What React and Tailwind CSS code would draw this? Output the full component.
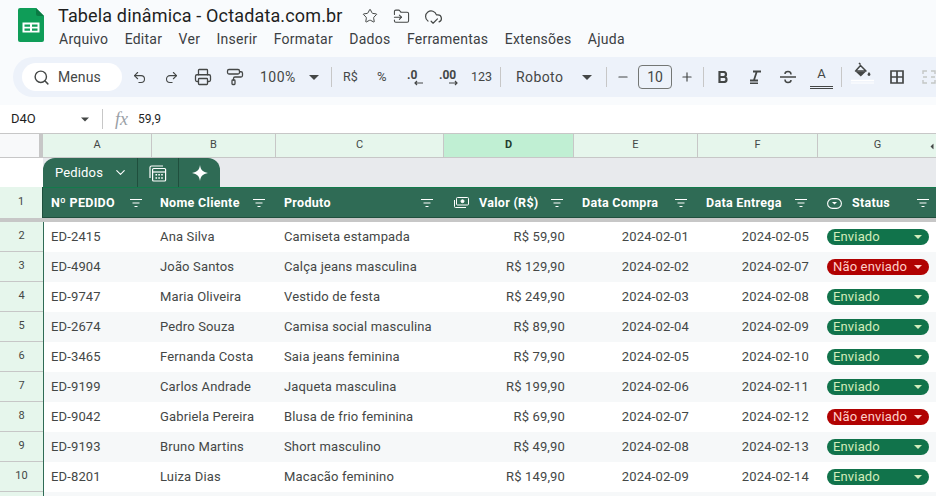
import React from "react";
import { Search, Undo2, Redo2, Printer, PaintRoller, Star, FolderInput, CloudCheck, ChevronDown, Minus, Plus } from "lucide-react";

const COLS = "grid grid-cols-[43px_109px_124px_168px_130px_124px_120px_119px]";
const rows = [
  [2,"ED-2415","Ana Silva","Camiseta estampada","R$ 59,90","2024-02-01","2024-02-05",true],
  [3,"ED-4904","João Santos","Calça jeans masculina","R$ 129,90","2024-02-02","2024-02-07",false],
  [4,"ED-9747","Maria Oliveira","Vestido de festa","R$ 249,90","2024-02-03","2024-02-08",true],
  [5,"ED-2674","Pedro Souza","Camisa social masculina","R$ 89,90","2024-02-04","2024-02-09",true],
  [6,"ED-3465","Fernanda Costa","Saia jeans feminina","R$ 79,90","2024-02-05","2024-02-10",true],
  [7,"ED-9199","Carlos Andrade","Jaqueta masculina","R$ 199,90","2024-02-06","2024-02-11",true],
  [8,"ED-9042","Gabriela Pereira","Blusa de frio feminina","R$ 69,90","2024-02-07","2024-02-12",false],
  [9,"ED-9193","Bruno Martins","Short masculino","R$ 49,90","2024-02-08","2024-02-13",true],
  [10,"ED-8201","Luiza Dias","Macacão feminino","R$ 149,90","2024-02-09","2024-02-14",true],
];

const Caret = ({ className = "" }) => (
  <svg width="10" height="5" viewBox="0 0 10 5" className={className} fill="currentColor"><path d="M0 0h10L5 5z" /></svg>
);
const Filter = () => (
  <svg width="14" height="10" viewBox="0 0 14 10" className="shrink-0 text-white" stroke="currentColor" strokeWidth="1" fill="none">
    <path d="M1 1.500h12M3.500 5h7M5.500 8.500h3" />
  </svg>
);
const Sep = () => <div className="w-px h-5 bg-[#c7c7c7] shrink-0" />;
const Logo = () => (
  <svg width="26" height="34" viewBox="0 0 26 34" className="shrink-0">
    <path d="M2 0h16l8 8v24a2 2 0 0 1-2 2H2a2 2 0 0 1-2-2V2a2 2 0 0 1 2-2z" fill="#0f9d58" />
    <path d="M18 0l8 8h-6a2 2 0 0 1-2-2z" fill="#0a7a43" />
    <path d="M4.500 14.500h17v10h-17z" fill="#fff" />
    <path d="M6.500 16.500h5.500v2.200H6.500zM14 16.500h5.500v2.200H14zM6.500 20.500h5.500v2.200H6.500zM14 20.500h5.500v2.200H14z" fill="#0f9d58" />
  </svg>
);
const Calc = () => (
  <svg width="18" height="18" viewBox="0 0 18 18" fill="none" stroke="#fff" strokeWidth="1.200">
    <path d="M1 14V3.500A1.500 1.500 0 0 1 2.500 2H14" />
    <rect x="3.600" y="4.500" width="13" height="12.500" rx="1" />
    <path d="M3.600 8h13" />
    <path d="M6.500 10.800h1.600M9.300 10.800h1.600M12.200 10.800h1.600M6.500 14h1.600M9.300 14h1.600M12.200 14h1.600" strokeWidth="1.500" />
  </svg>
);
const Spark = () => (
  <svg width="16" height="16" viewBox="0 0 16 16" fill="#fff"><path d="M8 0c.7 4.800 2.800 7 8 8-5.200 1-7.300 3.200-8 8-.7-4.800-2.800-7-8-8 5.200-1 7.300-3.200 8-8z" /></svg>
);
const Bucket = () => (
  <svg width="23" height="26" viewBox="0 0 23 26" fill="none">
    <path d="M8 1 9.500 2.500M5 8.500 9.500 3.500l5.500 5.500H4.500z" stroke="#444746" strokeWidth="1.500" strokeLinejoin="round" />
    <path d="M4.500 9.500h10.500L9.800 14.500z" fill="#444746" />
    <path d="M18 10c.9 1.200 1.400 2 1.400 2.600a1.400 1.400 0 0 1-2.800 0c0-.6.500-1.400 1.400-2.600z" fill="#444746" />
    <path d="M0 18.500h23" stroke="#fff" strokeWidth="1.500" />
    <path d="M0 21h23" stroke="#fff" strokeWidth="1" />
  </svg>
);

const ColHead = ({ children, active }) => (
  <div className={`flex items-center justify-center border-r border-[#c7c7c7] text-[11px] ${active ? "bg-[#c0efd3] font-bold text-[#1f3d2f]" : "bg-[#e6f6ec] text-[#444746]"}`}>
    {children}
  </div>
);
const Head = ({ children, icon, className = "" }) => (
  <div className={`bg-[#2f6b55] border-t border-[#137a4b] border-b border-b-[#1f4f3d] pt-px flex items-center justify-between font-bold text-[12.5px] text-white tracking-[0.3px] ${className}`}>
    {icon}
    <span className={icon ? "mr-auto ml-[10px]" : ""}>{children}</span>
    <Filter />
  </div>
);
const BodyRow = ({ num, striped, children }) => (
  <div className={`${COLS} h-[30px] shrink-0 text-[13px] text-[#444746] tracking-[0.15px]`}>
    <div className="bg-[#e6f6ec] flex items-center justify-center text-[11px] tracking-normal border-b border-[#c7c7c7]">{num}</div>
    <div className={`${striped ? "bg-[#f6f8f9]" : "bg-white"} col-span-7 border-l border-[#2f6b55] grid grid-cols-[108px_124px_168px_130px_124px_120px_119px] items-center`}>
      {children}
    </div>
  </div>
);

export default function App() {
  return (
    <div className="w-[936px] h-[496px] overflow-hidden bg-white font-['Roboto',sans-serif] text-[#444746] flex flex-col">
      <div className="h-[105px] shrink-0 bg-[#f9fbfd] flex flex-col">
        <div className="h-[57px] flex pl-[18px] pt-[8px]">
          <Logo />
          <div className="ml-[14px] flex flex-col">
            <div className="flex items-center h-[16px]">
              <span className="text-[18px] tracking-[0.15px] leading-[16px] text-[#1f1f1f]">Tabela dinâmica - Octadata.com.br</span>
              <Star size={16} strokeWidth={1.500} className="ml-[19px] text-[#444746]" />
              <FolderInput size={17} strokeWidth={1.500} className="ml-[15px] text-[#444746]" />
              <CloudCheck size={19} strokeWidth={1.500} className="ml-[14px] text-[#444746]" />
            </div>
            <div className="flex gap-[16.400px] mt-[7px] text-[14px] tracking-[0.25px] leading-[16px] text-[#3c4043] ml-px">
              {["Arquivo","Editar","Ver","Inserir","Formatar","Dados","Ferramentas","Extensões","Ajuda"].map(m => <span key={m}>{m}</span>)}
            </div>
          </div>
        </div>
        <div className="h-[40px] ml-[13px] pl-[9px] rounded-l-[20px] bg-[#edf2fa] flex items-center">
          <div className="w-[100px] h-[28px] rounded-full bg-white flex items-center pl-[11px] text-[14px] tracking-[0.1px] text-[#444746] shrink-0">
            <Search size={17} strokeWidth={2} />
            <span className="ml-[8px]">Menus</span>
          </div>
          <Undo2 size={15} strokeWidth={1.700} className="ml-[10px]" />
          <Redo2 size={15} strokeWidth={1.700} className="ml-[17px]" />
          <Printer size={18} strokeWidth={1.700} className="ml-[15px]" />
          <PaintRoller size={18} strokeWidth={1.700} className="ml-[14px]" />
          <span className="ml-[16px] text-[14px] tracking-[0.5px] w-[37px]">100%</span>
          <Caret className="ml-[12px]" />
          <div className="ml-[12px]"><Sep /></div>
          <span className="ml-[11px] text-[12.500px] w-[20px]">R$</span>
          <span className="ml-[14px] text-[13px] w-[12px]">%</span>
          <span className="ml-[18px] text-[12px] font-bold relative w-[15px] -top-[2px]">.0<svg className="absolute left-[7px] top-[14px]" width="10" height="6" viewBox="0 0 10 6" fill="none" stroke="#444746" strokeWidth="1.200"><path d="M9 3H1M3 1 1 3l2 2" /></svg></span>
          <span className="ml-[17px] text-[12px] font-bold relative w-[18px] -top-[2px]">.00<svg className="absolute left-[9px] top-[14px]" width="10" height="6" viewBox="0 0 10 6" fill="none" stroke="#444746" strokeWidth="1.200"><path d="M1 3h8M7 1l2 2-2 2" /></svg></span>
          <span className="ml-[14px] text-[12.500px] w-[19px]">123</span>
          <div className="ml-[10px]"><Sep /></div>
          <span className="ml-[15px] text-[14px] tracking-[0.4px] w-[48px]">Roboto</span>
          <Caret className="ml-[18px]" />
          <div className="ml-[14px]"><Sep /></div>
          <Minus size={14} strokeWidth={2} className="ml-[9px]" />
          <div className="ml-[8px] w-[34px] h-[24px] border border-[#747775] rounded-[4px] flex items-center justify-center text-[14px]">10</div>
          <Plus size={14} strokeWidth={2} className="ml-[8px]" />
          <div className="ml-[9px]"><Sep /></div>
          <svg className="ml-[14px]" width="10" height="12" viewBox="0 0 10 12" fill="none" stroke="#444746" strokeWidth="2.200"><path d="M1.500 1h4a2.500 2.500 0 0 1 0 5h-4zM1.500 6h4.500a2.500 2.500 0 0 1 0 5h-4.500z" /></svg>
          <svg className="ml-[22px]" width="11" height="14" viewBox="0 0 11 14" fill="none" stroke="#444746" strokeWidth="2"><path d="M3 1.500h8M6.800 1.500 4 10M0 10.500h8M0 13.300h8" strokeWidth="1.800" /></svg>
          <svg className="ml-[19px]" width="16" height="14" viewBox="0 0 16 14" fill="none" stroke="#444746" strokeWidth="1.500"><path d="M0 7h16M11 4.500C11 2.500 9.800 1.500 8 1.500S5 2.500 5 4M5 9.500c0 2 1.200 3 3 3s3-1 3-2.500" /></svg>
          <span className="ml-[14px] w-[23px] h-[23px] flex flex-col items-center text-[13px] leading-[16px] border-b-[3px] border-double border-[#444746]">A</span>
          <div className="ml-[8px]"><Sep /></div>
          <div className="ml-[9px] mt-[-4px]"><Bucket /></div>
          <svg className="ml-[16px]" width="14" height="14" viewBox="0 0 14 14" fill="none" stroke="#444746" strokeWidth="1.700"><path d="M1 1h12v12H1zM7 1v12M1 7h12" /></svg>
          <svg className="ml-[18px]" width="14" height="14" viewBox="0 0 14 14" fill="none" stroke="#c4c7c5" strokeWidth="1.400"><path d="M5 1H1v3M1 10v3h4M9 1h4v3M13 10v3H9M1 7h4M9 7h4" /></svg>
        </div>
      </div>

      <div className="h-[29px] shrink-0 flex items-center text-[12px] text-[#1f1f1f] border-b border-[#c7c7c7]">
        <span className="ml-[11px] w-[70px] text-[13px]">D4O</span>
        <Caret className="text-[#444746] w-[8px]" />
        <div className="ml-[13px]"><Sep /></div>
        <span className="ml-[12px] italic text-[18px] leading-[18px] text-[#9aa0a6] font-['Liberation_Serif'] w-[15px]">fx</span>
        <span className="ml-[8px] tracking-[0.1px]">59,9</span>
      </div>

      <div className={`${COLS} h-[24px] shrink-0 border-b border-[#c7c7c7]`}>
        <div className="bg-[#f8f9fa] border-r-[4px] border-[#c7c7c7]" />
        <ColHead>A</ColHead><ColHead>B</ColHead><ColHead>C</ColHead>
        <ColHead active>D</ColHead><ColHead>E</ColHead><ColHead>F</ColHead>
        <div className="relative flex items-center justify-center bg-[#e6f6ec] text-[11px]">G<Caret className="absolute right-[2px] top-[10px] w-[6px] rotate-90" /></div>
      </div>

      <div className="h-[29px] shrink-0 flex">
        <div className="w-[43px] shrink-0 bg-white" />
        <div className="flex-1 bg-[#e8eaed]">
          <div className="h-full w-[177px] rounded-t-[12px] bg-[#2f6b55] flex text-white">
            <div className="w-[95px] flex items-center pl-[12px] text-[13px] tracking-[0.15px] border-r border-[#1f4f3d]">Pedidos<ChevronDown size={15} strokeWidth={1.800} className="ml-[10px]" /></div>
            <div className="w-[41px] flex items-center justify-center border-r border-[#1f4f3d]"><Calc /></div>
            <div className="flex-1 flex items-center justify-center"><Spark /></div>
          </div>
        </div>
      </div>

      <div className={`${COLS} h-[31px] shrink-0`}>
        <div className="bg-[#e6f6ec] flex items-center justify-center text-[11px] border-r border-[#1f4f3d]">1</div>
        <Head className="pl-[8px] pr-[9px]">Nº PEDIDO</Head>
        <Head className="pl-[8px] pr-[10px]">Nome Cliente</Head>
        <Head className="pl-[8px] pr-[10px]">Produto</Head>
        <Head className="pl-[10px] pr-[10px]" icon={<svg width="15" height="12" viewBox="0 0 15 12" fill="none" stroke="#fff" strokeWidth="1"><rect x="2.500" y=".5" width="12" height="7.500" rx="1" /><circle cx="8.500" cy="4.200" r="1.500" fill="#fff" /><path d="M.5 3v6.500a1 1 0 0 0 1 1H12" /></svg>}>Valor (R$)</Head>
        <Head className="pl-[8px] pr-[10px]">Data Compra</Head>
        <Head className="pl-[8px] pr-[10px]">Data Entrega</Head>
        <Head className="pl-[9px] pr-[7px]" icon={<svg width="15" height="11" viewBox="0 0 15 11" fill="none" stroke="#fff" strokeWidth="1.100"><rect x=".6" y=".6" width="13.800" height="9.800" rx="4.900" /><path d="M5 4h5L7.500 6.500z" fill="#fff" stroke="none" /></svg>}>Status</Head>
      </div>
      <div className="h-[4px] shrink-0 bg-[#c7c7c7]" />

      {rows.map((r, i) => (
        <BodyRow key={r[0]} num={r[0]} striped={i % 2 === 1}>
          <span className="pl-[7px]">{r[1]}</span>
          <span className="pl-[8px]">{r[2]}</span>
          <span className="pl-[8px]">{r[3]}</span>
          <span className="text-right pr-[9px]">{r[4]}</span>
          <span className="text-right pr-[9px]">{r[5]}</span>
          <span className="text-right pr-[9px]">{r[6]}</span>
          <div className="pl-[9px]">
            <div className={`w-[102px] h-[16px] rounded-full flex items-center justify-between pl-[6px] pr-[7px] text-[13px] leading-[16px] ${r[7] ? "bg-[#11734b] text-[#d4edbc]" : "bg-[#b10202] text-[#ffcfc9]"}`}>
              <span>{r[7] ? "Enviado" : "Não enviado"}</span>
              <Caret className={`w-[8px] h-[4px] ${r[7] ? "text-[#d4edbc]" : "text-[#ffcfc9]"}`} />
            </div>
          </div>
        </BodyRow>
      ))}
      <BodyRow num="" striped />
    </div>
  );
}
